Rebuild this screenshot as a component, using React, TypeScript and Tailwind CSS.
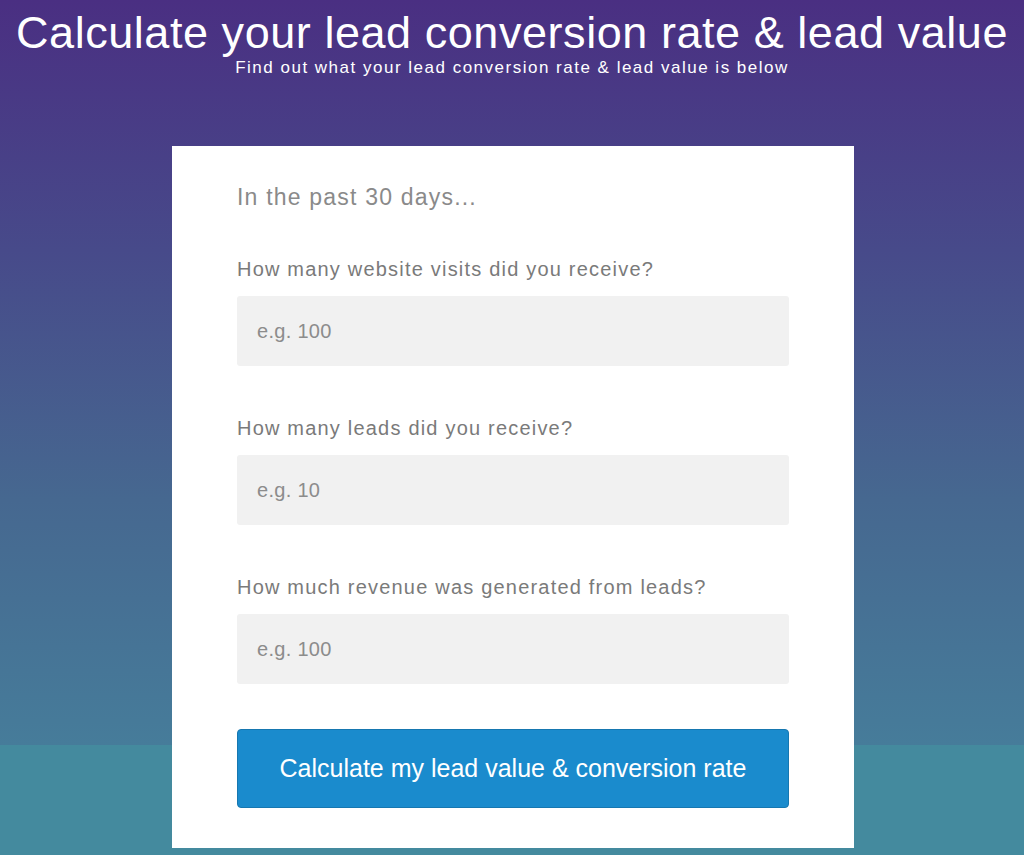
export default function App() {
  const fields = [
    { label: "How many website visits did you receive?", placeholder: "e.g. 100" },
    { label: "How many leads did you receive?", placeholder: "e.g. 10" },
    { label: "How much revenue was generated from leads?", placeholder: "e.g. 100" },
  ];

  return (
    <div className="min-h-[855px] w-full bg-[linear-gradient(180deg,#4a2f82_0px,#474a8a_250px,#466890_500px,#467c9a_745px,#448a9e_745px,#448a9e_100%)] font-['Liberation_Sans',Arial,sans-serif]">
      <header className="flex flex-col items-center pt-[10px] text-white">
        <h1 className="text-[45px] leading-[46px] tracking-[0.55px]">Calculate your lead conversion rate &amp; lead value</h1>
        <p className="mt-[2px] text-[17px] leading-[20px] tracking-[1.5px]">Find out what your lead conversion rate &amp; lead value is below</p>
      </header>

      <div className="mx-auto mt-[68px] w-[682px] translate-x-[1px] bg-white px-[65px] pt-[37px] pb-[40px]">
        <p className="text-[23px] leading-[28px] tracking-[1.2px] text-[#8a8a8a]">In the past 30 days...</p>

        <form className="mt-[45px] flex flex-col">
          {fields.map((field, i) => (
            <div key={field.label} className={i === 0 ? "" : "mt-[49px]"}>
              <label className="block text-[20px] leading-[26px] tracking-[1.2px] text-[#7a7a7a]">{field.label}</label>
              <input
                type="text"
                placeholder={field.placeholder}
                className="mt-[14px] block h-[70px] w-full rounded-[3px] bg-[#f1f1f1] px-[20px] text-[20px] tracking-[0.3px] text-[#555] outline-none placeholder:text-[#8c8c8c]"
              />
            </div>
          ))}

          <button
            type="button"
            className="mt-[45px] h-[79px] w-full rounded-[4px] border border-[#1677b0] bg-[#1a8bcd] text-[25px] text-white"
          >
            Calculate my lead value &amp; conversion rate
          </button>
        </form>
      </div>
    </div>
  );
}
